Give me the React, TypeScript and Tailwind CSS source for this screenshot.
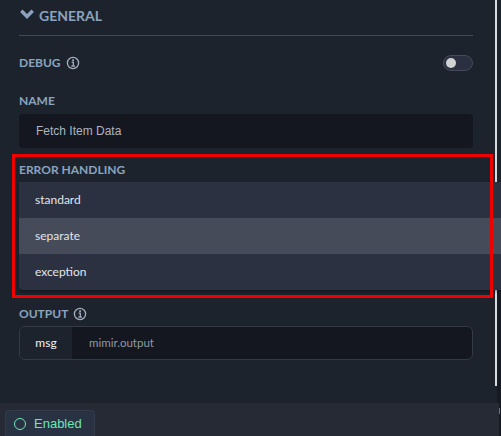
const labelCls = "font-['Lato',sans-serif] text-[12px] leading-4 font-bold text-[#8ba3bf]"

function InfoIcon() {
  return (
    <svg width="14" height="14" viewBox="0 0 14 14" fill="none" stroke="#a3afbf">
      <circle cx="7" cy="7" r="5.6" strokeWidth="1.3" />
      <path d="M5.6 6.2H7.3V10M5.3 10.1H9" strokeWidth="1.3" />
      <path d="M7.1 3.3V4.9" strokeWidth="1.7" />
    </svg>
  )
}

export default function App() {
  const options = ['standard', 'separate', 'exception']

  return (
    <div className="relative w-[501px] h-[436px] overflow-hidden flex flex-col bg-[#1e232e] font-['Lato',sans-serif]">
      <div className="h-[403px] shrink-0 relative bg-[#1d232d]">
        <div className="absolute left-[495px] top-0 w-[2px] h-[386px] bg-[#d8dade]" />
        <div className="absolute left-[497px] top-[290px] w-[4px] h-[113px] bg-[#161b23]" />
        <div className="relative w-[454px] ml-[19px] flex flex-col">
          <div className="h-[36px] border-b border-[#454a58] flex items-start pt-[7px] gap-[5px]">
            <svg width="14" height="10" viewBox="0 0 14 10" fill="none" className="mt-[2px] ml-[1px]">
              <path d="M1.3 1.8L7 7.5L12.7 1.8" stroke="#8ba3bf" strokeWidth="3.4" />
            </svg>
            <span className="font-['Lato',sans-serif] text-[14px] leading-[18px] font-bold text-[#8ba3bf]">GENERAL</span>
          </div>
          <div className="mt-[19px] h-[16px] flex items-center justify-between">
            <div className="flex items-center gap-[5px]">
              <span className={labelCls}>DEBUG</span>
              <InfoIcon />
            </div>
            <div className="w-[30px] h-[16px] rounded-full bg-[#2a3040] border border-[#454a5e] flex items-center pl-[2px]">
              <div className="w-[10px] h-[10px] rounded-full bg-[#d1d1d1]" />
            </div>
          </div>
          <div className={labelCls + ' mt-[22px]'}>NAME</div>
          <div className="mt-[5px] h-[34px] rounded bg-[#14171f] flex items-center pl-[17px] font-['Liberation_Sans',sans-serif] text-[12px] text-[#adb5c0]">
            Fetch Item Data
          </div>
          <div className={labelCls + ' mt-[14px]'}>ERROR HANDLING</div>
          <div className="mt-[4px] h-[108px] w-[482px] rounded-bl flex flex-col bg-[#2b3140] shadow-[0_2px_3px_rgba(0,0,0,0.3)]">
            {options.map((o) => (
              <div key={o} className={`h-[36px] flex items-center pl-[16px] text-[12px] text-[#e2e6ea] ${o === 'separate' ? 'bg-[#454b59]' : ''}`}>
                {o}
              </div>
            ))}
          </div>
          <div className="mt-[16px] h-[16px] flex items-center gap-[5px]">
            <span className={labelCls}>OUTPUT</span>
            <InfoIcon />
          </div>
          <div className="mt-[4px] h-[34px] rounded-md border border-[#353a48] flex overflow-hidden text-[12px]">
            <div className="w-[52px] flex items-center justify-center bg-[#1d232d] text-[#f2f4f6]">msg</div>
            <div className="flex-1 flex items-center pl-[17px] bg-[#14171f] text-[11.5px] text-[#8f97a6]">mimir.output</div>
          </div>
        </div>
        {/* annotation box */}
        <div className="absolute left-[12px] top-[154px] w-[481px] h-[144px] border-[3px] border-[#f00000]" />
      </div>
      <div className="flex-1 bg-[#252a35] flex items-end pl-[5px] border-r-2 border-[#161b23]">
        <div className="w-[90px] h-[26px] rounded-t bg-[#283242] border border-b-0 border-[#333b4a] flex items-center gap-[8px] pl-[8px]">
          <div className="w-[12px] h-[12px] rounded-full border-[1.5px] border-[#6ee7b7]" />
          <span className="font-['Liberation_Sans',sans-serif] text-[13px] text-[#6ee7b7]">Enabled</span>
        </div>
      </div>
      {/* scrollbar tick */}
      <div className="absolute left-[499px] top-[408px] w-[1px] h-[6px] bg-[#6b7280]" />
    </div>
  )
}
